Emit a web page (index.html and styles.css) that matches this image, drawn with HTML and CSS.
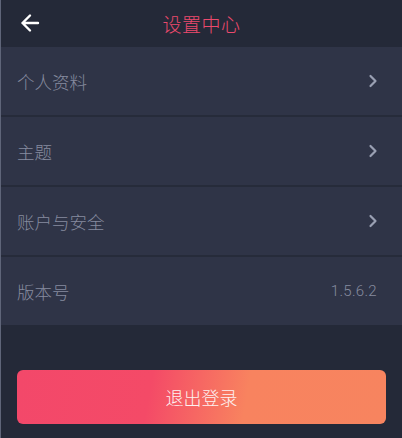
FILE: index.html
```html
<!DOCTYPE html>
<html lang="zh">
<head>
<meta charset="utf-8">
<title>设置中心</title>
<link rel="stylesheet" href="styles.css">
</head>
<body>
<div class="page">
  <header class="topbar">
    <button class="back" aria-label="返回">
      <svg width="20" height="20" viewBox="0 0 20 20"><path d="M18 10H2.5M10 2.5L2.5 10L10 17.5" fill="none" stroke="#fff" stroke-width="2.4" stroke-linecap="round" stroke-linejoin="round"/></svg>
    </button>
    <h1 class="title">设置中心</h1>
  </header>
  <ul class="list">
    <li class="row"><span class="label">个人资料</span><svg class="chev" width="10" height="14" viewBox="0 0 10 14"><path d="M2.5 2L7.5 7L2.5 12" fill="none" stroke="#9aa0b3" stroke-width="2.2" stroke-linecap="round" stroke-linejoin="round"/></svg></li>
    <li class="row"><span class="label">主题</span><svg class="chev" width="10" height="14" viewBox="0 0 10 14"><path d="M2.5 2L7.5 7L2.5 12" fill="none" stroke="#9aa0b3" stroke-width="2.2" stroke-linecap="round" stroke-linejoin="round"/></svg></li>
    <li class="row"><span class="label">账户与安全</span><svg class="chev" width="10" height="14" viewBox="0 0 10 14"><path d="M2.5 2L7.5 7L2.5 12" fill="none" stroke="#9aa0b3" stroke-width="2.2" stroke-linecap="round" stroke-linejoin="round"/></svg></li>
    <li class="row"><span class="label">版本号</span><span class="value">1.5.6.2</span></li>
  </ul>
  <div class="actions">
    <button class="logout">退出登录</button>
  </div>
</div>
</body>
</html>
```

FILE: styles.css
```css
* { box-sizing: border-box; }
html, body {
  margin: 0;
  padding: 0;
  background: #242938;
}
body {
  font-family: "Noto Sans CJK SC", "Noto Sans", sans-serif;
  width: 402px;
  height: 438px;
  overflow: hidden;
}
.page {
  min-height: 438px;
  background: #242938;
  border-left: 1px solid #5f6579;
}
.topbar {
  height: 47px;
  display: flex;
  align-items: center;
  justify-content: center;
  position: relative;
  background: #242938;
}
.back {
  position: absolute;
  left: 18px;
  top: 12px;
  width: 22px;
  height: 22px;
  padding: 0;
  border: 0;
  background: none;
  display: flex;
  align-items: center;
  justify-content: center;
}
.title {
  margin: 0;
  font-size: 19px;
  font-weight: 300;
  color: #ec4a6d;
  letter-spacing: 0.5px;
}
.list {
  list-style: none;
  margin: 0;
  padding: 0;
  display: flex;
  flex-direction: column;
  gap: 2px;
  background: #262b3a;
}
.row {
  height: 68px;
  background: #2f3447;
  display: flex;
  align-items: center;
  justify-content: space-between;
  padding: 0 23px 0 16px;
}
.label {
  font-size: 17.5px;
  font-weight: 300;
  color: #868b9f;
}
.chev { display: block; margin-right: 1px; }
.value {
  font-family: Roboto, "Noto Sans", sans-serif;
  font-size: 15px;
  font-weight: 300;
  color: #868b9f;
  margin-right: 2px;
  letter-spacing: 0.3px;
}
.actions {
  padding: 45px 16px 0 16px;
}
.logout {
  width: 369px;
  height: 54px;
  border: 0;
  border-radius: 6px;
  background: linear-gradient(100deg, #f3486a 0%, #f44a67 36%, #f8835f 62%, #f7845f 100%);
  color: #fdf1f1;
  font-family: "Noto Sans CJK SC", "Noto Sans", sans-serif;
  font-size: 18px;
  font-weight: 300;
  display: block;
}
```
